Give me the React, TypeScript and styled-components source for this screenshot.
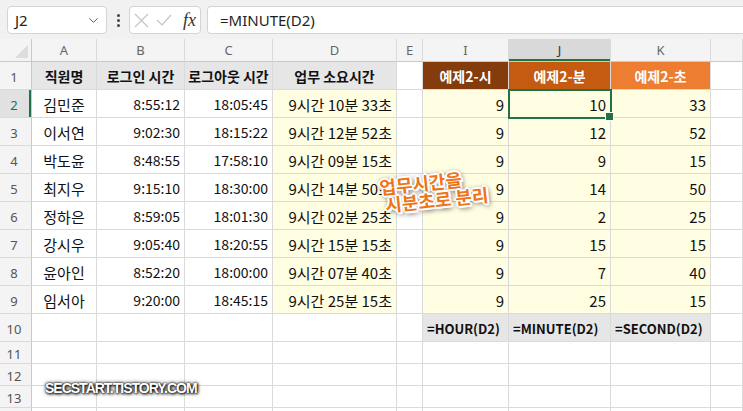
import React from 'react';
import styled, { createGlobalStyle } from 'styled-components';
import { ChevronDown } from 'lucide-react';

const GlobalStyle = createGlobalStyle`
  html, body {
    margin: 0;
    padding: 0;
    background: #fff;
  }
  body {
    font-family: 'Noto Sans CJK KR', 'Noto Sans', sans-serif;
  }
  * {
    box-sizing: border-box;
  }
`;

const GREEN = '#217346';
const GRID = '#dadada';
const HEAD_GREY = '#e7e6e6';
const YELLOW = '#fffde2';

// column widths: row header, A, B, C, D, E, I, J, K, rest
const COLS = [32, 65, 88, 88, 124, 26, 86, 102, 100, 32];
const LETTERS = ['A', 'B', 'C', 'D', 'E', 'I', 'J', 'K', ''];

const Page = styled.div`
  position: relative;
  width: 743px;
  height: 411px;
  overflow: hidden;
  background: #fff;
`;

const Toolbar = styled.div`
  display: flex;
  align-items: flex-start;
  height: 39px;
  padding: 6px 0 0 7px;
  background: #f1f1f1;
`;

const Box = styled.div<{ $w?: number }>`
  display: flex;
  align-items: center;
  height: 28px;
  ${(p) => (p.$w ? `width: ${p.$w}px;` : 'flex: 1;')}
  background: #fff;
  border: 1px solid #d4d4d4;
  border-radius: 4px;
`;

const NameBox = styled(Box)`
  justify-content: space-between;
  padding: 0 5px 0 7px;
  font-family: 'Noto Sans', sans-serif;
  font-size: 15px;
  color: #222;
`;

const Dots = styled.div`
  display: flex;
  flex-direction: column;
  align-items: center;
  justify-content: center;
  gap: 2px;
  width: 22px;
  height: 28px;

  span {
    width: 3px;
    height: 3px;
    border-radius: 50%;
    background: #444;
  }
`;

const FxBox = styled(Box)`
  padding: 0 4px 0 4px;
  gap: 7px;
  margin-right: 6px;
`;

const Fx = styled.span`
  margin-left: auto;
  font-family: 'Liberation Serif', serif;
  font-style: italic;
  font-size: 18px;
  color: #333;
`;

const FormulaBox = styled(Box)`
  padding-left: 12px;
  border-right: none;
  border-radius: 4px 0 0 4px;
  font-family: 'Noto Sans', sans-serif;
  font-size: 15px;
  color: #1f1f1f;
`;

const Row = styled.div<{ $h: number }>`
  display: flex;
  height: ${(p) => p.$h}px;
`;

const Corner = styled.div`
  position: relative;
  width: ${COLS[0]}px;
  background: #f4f4f4;
  border-right: 1px solid #c9c9c9;
  border-bottom: 1px solid #c9c9c9;

  &::after {
    content: '';
    position: absolute;
    right: 3px;
    bottom: 3px;
    border-style: solid;
    border-width: 0 0 13px 13px;
    border-color: transparent transparent #dcdcdc transparent;
  }
`;

const ColHead = styled.div<{ $w: number; $active?: boolean }>`
  display: flex;
  align-items: center;
  justify-content: center;
  width: ${(p) => p.$w}px;
  background: ${(p) => (p.$active ? '#d9d9d9' : '#f4f4f4')};
  border-right: 1px solid ${GRID};
  border-bottom: 1px solid #c9c9c9;
  box-shadow: ${(p) => (p.$active ? `inset 0 -2px 0 ${GREEN}` : 'none')};
  font-family: 'Noto Sans', sans-serif;
  font-size: 13px;
  color: ${(p) => (p.$active ? '#333' : '#666')};
`;

const RowHead = styled.div<{ $active?: boolean }>`
  display: flex;
  align-items: center;
  justify-content: center;
  width: ${COLS[0]}px;
  padding: 3px 3px 0 0;
  background: ${(p) => (p.$active ? '#e1e1e1' : '#f4f4f4')};
  border-right: 1px solid #c9c9c9;
  border-bottom: 1px solid ${GRID};
  box-shadow: ${(p) => (p.$active ? `inset -2px 0 0 ${GREEN}` : 'none')};
  font-family: 'Noto Sans', sans-serif;
  font-size: 13px;
  color: ${(p) => (p.$active ? GREEN : '#555')};
`;

type Align = 'left' | 'center' | 'right';

const Cell = styled.div<{
  $w: number;
  $fill?: string;
  $align?: Align;
  $bold?: boolean;
  $color?: string;
  $size?: number;
  $selected?: boolean;
}>`
  position: relative;
  display: flex;
  align-items: center;
  justify-content: ${(p) =>
    p.$align === 'right' ? 'flex-end' : p.$align === 'center' ? 'center' : 'flex-start'};
  width: ${(p) => p.$w}px;
  padding: 1px 4px 0 4px;
  background: ${(p) => p.$fill || '#fff'};
  border-right: 1px solid ${GRID};
  border-bottom: 1px solid ${GRID};
  font-size: ${(p) => p.$size || 15}px;
  font-weight: ${(p) => (p.$bold ? 700 : 400)};
  color: ${(p) => p.$color || '#111'};
  white-space: nowrap;
  ${(p) =>
    p.$selected &&
    `
    outline: 2px solid ${GREEN};
    outline-offset: -1px;
    z-index: 1;
    &::after {
      content: '';
      position: absolute;
      right: -4px;
      bottom: -4px;
      width: 7px;
      height: 7px;
      background: ${GREEN};
      border: 1px solid #fff;
    }
  `}
`;

const Note = styled.div`
  position: absolute;
  left: 380px;
  top: 172px;
  width: 112px;
  transform: rotate(-6deg);
  font-size: 18px;
  font-weight: 700;
  line-height: 18px;
  color: #ee7518;
  text-shadow: 1px 0 0 #fff, -1px 0 0 #fff, 0 1px 0 #fff, 0 -1px 0 #fff,
    1px 1px 0 #fff, -1px -1px 0 #fff, 1px -1px 0 #fff, -1px 1px 0 #fff,
    2px 0 0 #fff, -2px 0 0 #fff, 0 2px 0 #fff, 0 -2px 0 #fff,
    2px 2px 1px #fff, 0 0 5px rgba(0, 0, 0, 0.7), 2px 3px 5px rgba(0, 0, 0, 0.6);

  div + div {
    padding-left: 4px;
  }
`;

const Watermark = styled.div`
  position: absolute;
  left: 45px;
  top: 380px;
  font-family: 'Liberation Sans', sans-serif;
  font-size: 14px;
  font-weight: 700;
  letter-spacing: -1px;
  color: #fff;
  text-shadow: 0 0 2px #000, 1px 1px 3px #000, 0 0 4px rgba(0, 0, 0, 0.8);
`;

type CellSpec = {
  text?: string;
  fill?: string;
  align?: Align;
  bold?: boolean;
  color?: string;
  size?: number;
  selected?: boolean;
};

const names = ['김민준', '이서연', '박도윤', '최지우', '정하은', '강시우', '윤아인', '임서아'];
const logins = ['8:55:12', '9:02:30', '8:48:55', '9:15:10', '8:59:05', '9:05:40', '8:52:20', '9:20:00'];
const logouts = ['18:05:45', '18:15:22', '17:58:10', '18:30:00', '18:01:30', '18:20:55', '18:00:00', '18:45:15'];
const minutes = [10, 12, 9, 14, 2, 15, 7, 25];
const seconds = [33, 52, 15, 50, 25, 15, 40, 15];

const pad = (n: number) => String(n).padStart(2, '0');

const header = (text: string, fill = HEAD_GREY, color = '#111'): CellSpec => ({
  text,
  fill,
  color,
  bold: true,
  align: 'center',
  size: 14,
});

const empty: CellSpec = {};
const blankRow = (h: number) => ({ h, cells: Array(9).fill(empty) as CellSpec[] });

const rows: { h: number; cells: CellSpec[] }[] = [
  {
    h: 28,
    cells: [
      header('직원명'),
      header('로그인 시간'),
      header('로그아웃 시간'),
      header('업무 소요시간'),
      empty,
      header('예제2-시', '#843c0c', '#fff'),
      header('예제2-분', '#c55a11', '#fff'),
      header('예제2-초', '#ed7d31', '#fff'),
      empty,
    ],
  },
  ...names.map((name, i) => ({
    h: 28,
    cells: [
      { text: name, align: 'center' as Align },
      { text: logins[i], align: 'right' as Align, size: 14 },
      { text: logouts[i], align: 'right' as Align, size: 14 },
      {
        text: `9시간 ${pad(minutes[i])}분 ${seconds[i]}초`,
        align: 'right' as Align,
        fill: YELLOW,
      },
      empty,
      { text: '9', align: 'right' as Align, fill: YELLOW },
      { text: String(minutes[i]), align: 'right' as Align, fill: YELLOW, selected: i === 0 },
      { text: String(seconds[i]), align: 'right' as Align, fill: YELLOW },
      empty,
    ],
  })),
  {
    h: 28,
    cells: [
      empty,
      empty,
      empty,
      empty,
      empty,
      { text: '=HOUR(D2)', fill: HEAD_GREY, bold: true, size: 13 },
      { text: '=MINUTE(D2)', fill: HEAD_GREY, bold: true, size: 13 },
      { text: '=SECOND(D2)', fill: HEAD_GREY, bold: true, size: 13 },
      empty,
    ],
  },
  blankRow(22),
  blankRow(22),
  blankRow(22),
  blankRow(22),
];

const CancelIcon = () => (
  <svg width="15" height="15" viewBox="0 0 15 15" fill="none" stroke="#c4c4c4" strokeWidth="1.2">
    <path d="M1 1 L14 14 M14 1 L1 14" />
  </svg>
);

const EnterIcon = () => (
  <svg width="16" height="12" viewBox="0 0 16 12" fill="none" stroke="#c4c4c4" strokeWidth="1.2">
    <path d="M1 6 L6 11 L15 1" />
  </svg>
);

const App: React.FC = () => {
  return (
    <Page>
      <GlobalStyle />
      <Toolbar>
        <NameBox $w={100}>
          <span>J2</span>
          <ChevronDown size={15} color="#555" strokeWidth={1.6} />
        </NameBox>
        <Dots>
          <span />
          <span />
          <span />
        </Dots>
        <FxBox $w={72}>
          <CancelIcon />
          <EnterIcon />
          <Fx>fx</Fx>
        </FxBox>
        <FormulaBox>=MINUTE(D2)</FormulaBox>
      </Toolbar>

      <Row $h={23}>
        <Corner />
        {LETTERS.map((l, i) => (
          <ColHead key={i} $w={COLS[i + 1]} $active={l === 'J'}>
            {l}
          </ColHead>
        ))}
      </Row>

      {rows.map((row, r) => (
        <Row key={r} $h={row.h}>
          {/* the last row only peeks in at the bottom edge, so no number */}
          <RowHead $active={r === 1}>{r < 13 ? r + 1 : ''}</RowHead>
          {row.cells.map((c, i) => (
            <Cell
              key={i}
              $w={COLS[i + 1]}
              $fill={c.fill}
              $align={c.align}
              $bold={c.bold}
              $color={c.color}
              $size={c.size}
              $selected={c.selected}
            >
              {c.text}
            </Cell>
          ))}
        </Row>
      ))}

      <Note>
        <div>업무시간을</div>
        <div>시분초로 분리</div>
      </Note>
      <Watermark>SECSTART.TISTORY.COM</Watermark>
    </Page>
  );
};

export default App;
